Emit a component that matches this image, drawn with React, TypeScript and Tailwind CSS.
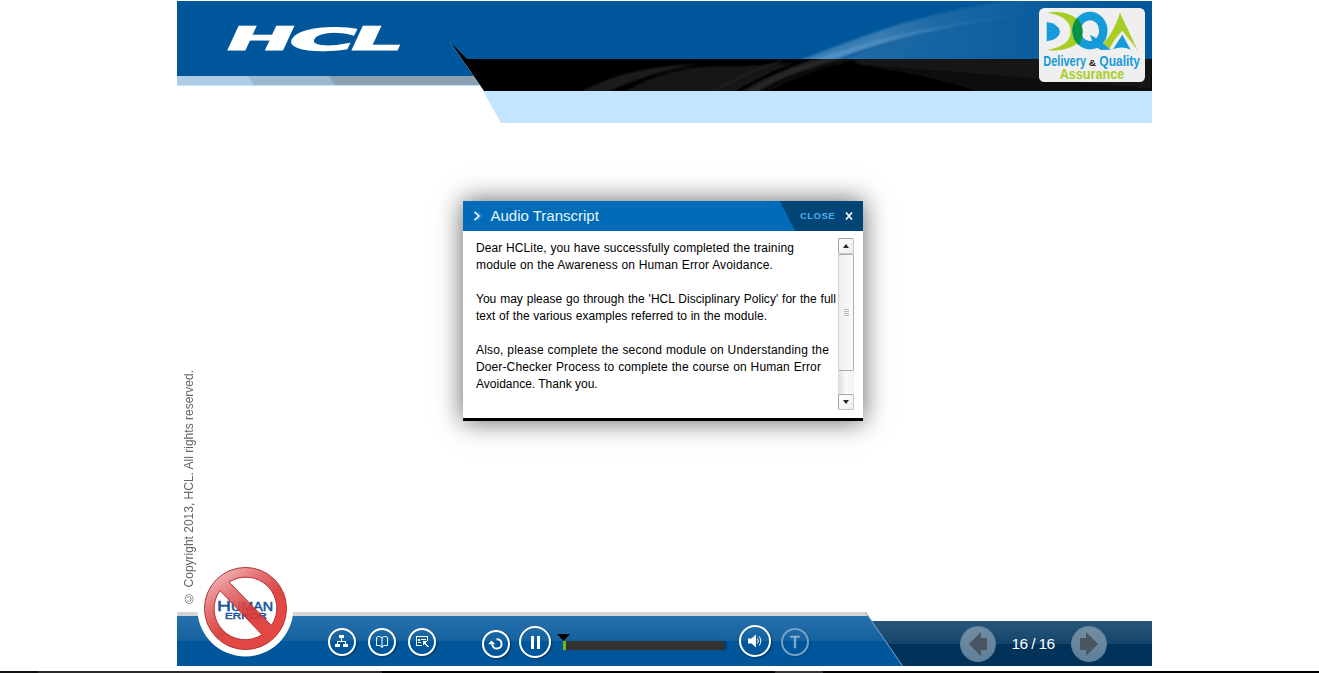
import React from "react";

const transcript: { text: string; width: string }[][] = [
  [
    { text: "Dear HCLite, you have successfully completed the training", width: "w-[318px] tracking-[0.11px]" },
    { text: "module on the Awareness on Human Error Avoidance.", width: "w-[297px] tracking-[0.17px]" },
  ],
  [
    { text: "You may please go through the 'HCL Disciplinary Policy' for the full", width: "w-[360px] tracking-[0.02px]" },
    { text: "text of the various examples referred to in the module.", width: "w-[291px] tracking-[0.03px]" },
  ],
  [
    { text: "Also, please complete the second module on Understanding the", width: "w-[353px] tracking-[0.18px]" },
    { text: "Doer-Checker Process to complete the course on Human Error", width: "w-[345px] tracking-[0.12px]" },
    { text: "Avoidance. Thank you.", width: "w-[121px]" },
  ],
];

function HclLogo() {
  return (
    <svg className="absolute left-[23px] top-[4px] overflow-visible" width="240" height="60" viewBox="200 5 240 60" role="img" aria-label="HCL">
      <g fill="#fff" stroke="#fff" strokeWidth="1.2" fontFamily="DejaVu Sans" fontWeight="700" fontSize="34">
        <text transform="matrix(2.38 0 -0.44 0.96 221.5 50.4)">H</text>
        <text transform="matrix(2.62 0 -0.44 0.88 284.5 49.8)" strokeWidth="2">C</text>
        <text transform="matrix(2.45 0 -0.44 0.96 345.5 50.4)">L</text>
      </g>
    </svg>
  );
}

function Swoosh() {
  return (
    <svg className="absolute inset-0" width="975" height="122" viewBox="177 1 975 122" aria-hidden="true">
      <defs>
        <linearGradient id="fade" gradientUnits="userSpaceOnUse" x1="820" y1="0" x2="1130" y2="0">
          <stop offset="0" stopColor="#fff" stopOpacity="0.13" />
          <stop offset="0.5" stopColor="#fff" stopOpacity="0.07" />
          <stop offset="1" stopColor="#fff" stopOpacity="0" />
        </linearGradient>
        <linearGradient id="streak" gradientUnits="userSpaceOnUse" x1="790" y1="0" x2="1040" y2="0">
          <stop offset="0" stopColor="#b9dcf5" stopOpacity="0.14" />
          <stop offset="0.35" stopColor="#b9dcf5" stopOpacity="0.18" />
          <stop offset="0.6" stopColor="#b9dcf5" stopOpacity="0.03" />
          <stop offset="1" stopColor="#b9dcf5" stopOpacity="0" />
        </linearGradient>
        <linearGradient id="line" gradientUnits="userSpaceOnUse" x1="810" y1="0" x2="1040" y2="0">
          <stop offset="0" stopColor="#9dcbee" stopOpacity="0.25" />
          <stop offset="0.5" stopColor="#9dcbee" stopOpacity="0.2" />
          <stop offset="1" stopColor="#9dcbee" stopOpacity="0" />
        </linearGradient>
        <filter id="soft" x="-5%" y="-5%" width="110%" height="110%">
          <feGaussianBlur stdDeviation="0.8" />
        </filter>
        <clipPath id="blueBand"><rect x="700" y="1" width="452" height="58" /></clipPath>
        <clipPath id="blackBand"><rect x="500" y="59" width="652" height="32" /></clipPath>
      </defs>
      <g clipPath="url(#blueBand)">
        <g filter="url(#soft)">
          <path d="M800 60 Q855 39 905 23 Q970 4 1040 -4 L1152 -4 L1152 64 L800 64 Z" fill="url(#fade)" />
          <path d="M798 61 Q855 38 905 22 Q970 4 1040 -2 Q1010 14 960 23 Q890 37 832 61 Z" fill="url(#streak)" />
          <path d="M808 61 Q870 41 920 30 Q980 19 1040 12 Q960 24 915 35 Q875 44 832 61 Z" fill="url(#line)" />
          <path d="M832 60 Q870 45 915 36 L915 38 Q880 46 846 60 Z" fill="#00569a" opacity="0.45" />
        </g>
      </g>
      <g clipPath="url(#blackBand)">
        <g filter="url(#soft)">
          <path d="M580 92 Q630 65 700 64 Q650 72 608 92 Z" fill="#1c1c1c" />
          <path d="M624 92 Q665 67 720 66 Q790 66 812 59 L832 59 Q780 75 752 92 Z" fill="#171717" />
          <path d="M712 92 Q750 70 782 61" stroke="#292929" strokeWidth="1.5" fill="none" />
          <path d="M736 92 Q770 72 810 59" stroke="#000" strokeWidth="3" fill="none" />
          <path d="M744 92 Q785 67 824 58 L848 58 Q790 72 758 92 Z" fill="#252525" />
          <path d="M768 90 Q810 68 850 60" stroke="#1b1b1b" strokeWidth="1.5" fill="none" />
          <path d="M848 58 L1152 58 L1152 93 L990 93 Q930 76 860 65 Z" fill="#121212" />
          <path d="M1160 93 L980 93 Q930 76 860 65 Q960 72 1160 90 Z" fill="#070707" />
        </g>
      </g>
    </svg>
  );
}

function DqaLogo() {
  return (
    <svg className="absolute right-[7px] top-[7px] overflow-visible" width="106" height="74" viewBox="27 24 318 222" role="img" aria-label="Delivery and Quality Assurance">
      <defs>
        <clipPath id="ringClip"><ellipse cx="180" cy="92" rx="53" ry="57" /></clipPath>
      </defs>
      <rect x="27" y="24" width="318" height="222" rx="16" fill="#efefef" />
      <path d="M50 66 Q88 72 90 95 Q88 118 50 124 Z" fill="#159bd9" />
      <path d="M52 38 C112 28 158 55 158 95 C158 132 112 157 50 150 C96 144 122 125 122 94 C122 64 98 45 52 38 Z" fill="#a8ce26" />
      <ellipse cx="180" cy="92" rx="40" ry="44" fill="none" stroke="#159bd9" strokeWidth="25" />
      <path d="M180 104 Q206 116 242 149 L213 150 Q190 140 180 104 Z" fill="#159bd9" />
      <g clipPath="url(#ringClip)">
        <path d="M126 40 Q158 65 158 95 Q158 125 138 145 L120 145 L120 40 Z" fill="#079246" />
      </g>
      <path d="M270 38 L323 151 Q306 128 277 92 Q256 112 238 146 L220 130 Q252 96 270 38 Z" fill="#a8ce26" />
      <path d="M277 104 L302 149 Q276 136 249 148 Z" fill="#159bd9" />
      <g fontFamily="Liberation Sans" fontWeight="700">
        <text x="40" y="197" fontSize="45" fill="#159bd9" textLength="128" lengthAdjust="spacingAndGlyphs">Delivery</text>
        <text x="176" y="197" fontSize="25" fill="#222" textLength="22" lengthAdjust="spacingAndGlyphs">&amp;</text>
        <text x="208" y="197" fontSize="45" fill="#159bd9" textLength="122" lengthAdjust="spacingAndGlyphs">Quality</text>
        <text x="89" y="236" fontSize="42" fill="#a8ce26" textLength="194" lengthAdjust="spacingAndGlyphs">Assurance</text>
      </g>
    </svg>
  );
}

function Header() {
  return (
    <header className="relative h-[122px] shrink-0">
      <div className="h-[58px] bg-[#00569a]" />
      <div className="ml-[273px] h-[32px] bg-black" />
      <div className="ml-[306px] h-[32px] bg-[#c4e5ff] [clip-path:polygon(0_0,100%_0,100%_100%,18px_100%)]" />
      <Swoosh />
      <div className="absolute left-[273px] top-[41px] h-[18px] w-[18px] bg-black [clip-path:polygon(0_0,100%_100%,12px_100%)]" />
      <div className="absolute left-0 top-[41px] h-[49px] w-[307px] bg-white [clip-path:polygon(0_0,273px_0,100%_100%,0_100%)]">
        <div className="h-[34px] bg-[#00569a]" />
        <div className="flex h-[10px] border-b border-[#c4e5ff] bg-[#8a9fb2]">
          <div className="relative w-[158px] bg-[#9db7cd] [clip-path:polygon(0_0,152px_0,100%_100%,0_100%)]">
            <div className="h-full w-[77px] bg-[#aecde6] [clip-path:polygon(0_0,71px_0,100%_100%,0_100%)]" />
          </div>
        </div>
      </div>
      <HclLogo />
      <DqaLogo />
    </header>
  );
}

function ScrollButton({ up }: { up?: boolean }) {
  return (
    <button className="flex h-[16px] w-[16px] items-center justify-center rounded-[2px] border border-[#a3a6a9] border-b-[#c4c6c8] border-r-[#c4c6c8] bg-gradient-to-br from-white to-[#ececec]">
      <svg width="6" height="4" viewBox="0 0 6 4"><path d={up ? "M0 4 L3 0 L6 4Z" : "M0 0 L3 4 L6 0Z"} fill="#1b2a36" /></svg>
    </button>
  );
}

function Dialog() {
  return (
    <section className="ml-[261px] mt-[78px] flex h-[220px] w-[400px] flex-col border-b-[3px] border-black bg-white shadow-[0_0_24px_1px_rgba(0,0,0,0.58)]">
      <div className="flex h-[30px] shrink-0 items-center bg-[#006cb7]">
        <svg className="ml-[10px]" width="11" height="10" viewBox="0 0 11 10" fill="none">
          <path d="M5 1 L9 5 L5 9" stroke="#1a86d8" strokeWidth="1.5" />
          <path d="M1.5 0.8 L6 5 L1.5 9.2" stroke="#fff" strokeWidth="1.6" />
        </svg>
        <h1 className="ml-[6.5px] mt-px text-[15px] text-[#e8f4fc]">Audio Transcript</h1>
        <button className="ml-auto flex h-full w-[83px] items-center bg-[#004575] pl-[19.5px] [clip-path:polygon(0_0,100%_0,100%_100%,15px_100%)]">
          <span className="w-[36px] text-[9.5px] font-bold tracking-[0.5px] text-[#4fb0e4]">CLOSE</span>
          <svg className="ml-[9px]" width="8" height="8" viewBox="0 0 8 8"><path d="M1 0.5 L7 7.5 M7 0.5 L1 7.5" stroke="#fff" strokeWidth="1.6" /></svg>
        </button>
      </div>
      <div className="flex flex-1 pl-[13px] pr-[8px] pt-[7px]">
        <div className="flex w-[362px] shrink-0 flex-col gap-[17px] pt-[2px] text-[12px] leading-[17px] text-black">
          {transcript.map((lines) => (
            <p key={lines[0].text}>
              {lines.map((line) => (
                <span key={line.text} className={"block whitespace-nowrap text-justify [text-align-last:justify] " + line.width}>{line.text}</span>
              ))}
            </p>
          ))}
        </div>
        <div className="flex h-[172px] w-[16px] flex-col bg-gradient-to-r from-[#dcdcdc] via-[#fafafa] to-[#f2f2f2]">
          <ScrollButton up />
          <div className="flex h-[117px] flex-col items-center justify-center gap-px rounded-[2px] border border-[#a9abad] border-l-[#d0d0d0] bg-gradient-to-r from-[#efefef] to-[#fbfbfb]">
            <i className="h-px w-[5px] bg-[#b5b8ba]" />
            <i className="h-px w-[5px] bg-[#b5b8ba]" />
            <i className="h-px w-[5px] bg-[#b5b8ba]" />
            <i className="h-px w-[5px] bg-[#b5b8ba]" />
          </div>
          <div className="flex-1" />
          <ScrollButton />
        </div>
      </div>
    </section>
  );
}

function HumanErrorBadge() {
  return (
    <svg className="absolute bottom-[9px] left-[20px]" width="97" height="97" viewBox="197 560.5 97 97" role="img" aria-label="No human error">
      <defs>
        <linearGradient id="ring" x1="0.1" y1="0" x2="0.65" y2="0.75">
          <stop offset="0" stopColor="#f5c4c4" />
          <stop offset="0.4" stopColor="#e2696a" />
          <stop offset="0.75" stopColor="#d83330" />
          <stop offset="1" stopColor="#df3431" />
        </linearGradient>
      </defs>
      <circle cx="245.3" cy="609" r="48" fill="#fff" />
      <g fill="#15549b" stroke="#15549b" strokeWidth="0.5" fontFamily="Liberation Sans">
        <text x="217" y="611" fontSize="15" textLength="14" lengthAdjust="spacingAndGlyphs">H</text>
        <text x="231" y="611" fontSize="12" textLength="42" lengthAdjust="spacingAndGlyphs">UMAN</text>
        <text x="225" y="619" fontSize="9" textLength="42" lengthAdjust="spacingAndGlyphs">ERROR</text>
      </g>
      <path
        fillRule="evenodd"
        fill="url(#ring)"
        stroke="#b23035"
        strokeWidth="1"
        d="M204.5 609 a41 41 0 1 0 82 0 a41 41 0 1 0 -82 0 Z M229 582.6 A31 31 0 0 1 271.5 626 Z M220 591 L262 635.2 A31 31 0 0 1 220 591 Z"
        fillOpacity="0.9"
      />
    </svg>
  );
}

function RoundButton({ className, children }: { className: string; children: React.ReactNode }) {
  return (
    <button className={"flex shrink-0 items-center justify-center rounded-full border-2 border-white text-white shadow-[1px_1px_2px_rgba(0,0,0,0.4)] " + className}>
      {children}
    </button>
  );
}

function NavButton({ className, left }: { className: string; left?: boolean }) {
  return (
    <button className={"flex h-[36px] w-[36px] shrink-0 items-center justify-center rounded-full border border-[#63839b] bg-gradient-to-b from-[#718da2] to-[#5f7f98] " + className}>
      <svg width="18" height="24" viewBox="0 0 18 24">
        <path d={left ? "M0 12 L12 0 V6 H18 V18 H12 V24 Z" : "M18 12 L6 0 V6 H0 V18 H6 V24 Z"} fill="#4a5562" />
      </svg>
    </button>
  );
}

function Footer() {
  return (
    <footer className="relative flex h-[54px] shrink-0">
      <div className="absolute bottom-0 right-0 h-[45px] w-[287px] bg-[linear-gradient(to_bottom,#28567b_0px,#15446a_23px,#00325a_23px,#00325a_45px)] [clip-path:polygon(0_0,100%_0,100%_100%,31px_100%)]" />
      <div className="absolute left-0 top-0 h-[54px] w-[726px] bg-[#7fa9cb] [clip-path:polygon(0_0,689px_0,100%_100%,0_100%)]" />
      <div className="absolute left-0 top-0 h-[54px] w-[725px] bg-[linear-gradient(to_bottom,#d0d4d7_0px,#d0d4d7_4px,#2771ad_4px,#15629f_29px,#00569a_29px,#00569a_54px)] [clip-path:polygon(0_0,688px_0,100%_100%,0_100%)]" />
      <div className="relative flex w-full items-start">
        <RoundButton className="ml-[151px] mt-[16px] h-[28px] w-[28px]">
          <svg className="mb-[2px] mr-px shrink-0" width="13" height="12" viewBox="0 0 13 12" shapeRendering="crispEdges" fill="#fff">
            <path d="M4 0h5v3H4zM6 3h1v3H6zM2 6h9v1H2zM2 7h1v2H2zM10 7h1v2h-1zM0 9h5v3H0zM8 9h5v3H8z" />
          </svg>
        </RoundButton>
        <RoundButton className="ml-[12px] mt-[16px] h-[28px] w-[28px]">
          <svg className="mb-px" width="12" height="14" viewBox="0 0 12 14" fill="none" stroke="#fff">
            <path d="M6 3 Q5 1.5 3.5 1.5 H2 L0.5 2.5 V10.5 H4 L6 12 L8 10.5 H11.5 V2.5 L10 1.5 H8.5 Q7 1.5 6 3 V13" />
          </svg>
        </RoundButton>
        <RoundButton className="ml-[12px] mt-[16px] h-[28px] w-[28px]">
          <svg width="13" height="12" viewBox="0 0 13 12" shapeRendering="crispEdges" fill="#fff">
            <path d="M0 0h12v1H0zM0 1h1v9H0zM11 1h1v4h-1zM0 9h6v1H0zM2 3h2v2H2zM5 3h5v1H5zM2 6h3v1H2zM7 5h4v1H7zM7 6h3v1H7zM7 7h3v1H7zM7 8h1v1H7zM9 8h2v1H9zM10 9h2v1h-2zM11 10h2v1h-2z" />
          </svg>
        </RoundButton>
        <RoundButton className="ml-[46px] mt-[18px] h-[28px] w-[28px]">
          <svg className="mb-px mr-px" width="15" height="14" viewBox="0 0 15 14">
            <path d="M8.6 2.2 A4.7 4.7 0 1 1 4.2 7.2" fill="none" stroke="#fff" strokeWidth="2" />
            <path d="M0 7.2 L3.4 3.4 L7.4 7.2 Z" fill="#fff" />
          </svg>
        </RoundButton>
        <RoundButton className="ml-[9px] mt-[14px] h-[32px] w-[32px]">
          <svg width="9" height="13" viewBox="0 0 9 13" fill="#fff"><path d="M0 0h3v13H0zM6 0h3v13H6z" /></svg>
        </RoundButton>
        <div className="ml-[6px] mt-[22px] w-[168px]">
          <svg className="block" width="13" height="7" viewBox="0 0 13 7"><path d="M0 0 H13 L6.5 7 Z" fill="#000" /></svg>
          <div className="ml-[6px] flex h-[9px] w-[161px] bg-[#333] shadow-[2px_0_3px_rgba(0,20,60,0.5),0_-1px_0_#1f6cab,0_1px_0_#1260a3]">
            <div className="w-[3px] bg-[#78b80c]" />
          </div>
        </div>
        <RoundButton className="ml-[14px] mt-[13px] h-[32px] w-[32px]">
          <svg className="mb-px mr-px" width="14" height="14" viewBox="0 0 14 14" fill="#fff">
            <path d="M0 4.5 H3.5 L8 0.5 V13.5 L3.5 9.5 H0 Z" />
            <path d="M9.5 4.5 Q11 7 9.5 9.5 M11.2 2.5 Q14.4 7 11.2 11.5" fill="none" stroke="#fff" />
          </svg>
        </RoundButton>
        <button className="ml-[10px] mt-[16px] flex h-[28px] w-[28px] items-center justify-center rounded-full border-2 border-[#73a2c9] text-[#8db3d2] shadow-[1px_1px_2px_rgba(0,0,0,0.2)]">
          <span className="mt-px text-[16px] leading-none [-webkit-text-stroke:0.6px_#8db3d2]">T</span>
        </button>
        <NavButton left className="ml-[151px] mt-[14px]" />
        <span className="mt-[22px] w-[74px] whitespace-nowrap text-center text-[15.5px] leading-[20px] tracking-[-0.6px] text-white">16 / 16</span>
        <NavButton className="ml-px mt-[14px]" />
      </div>
      <HumanErrorBadge />
    </footer>
  );
}

export default function App() {
  return (
    <div className="flex h-[673px] w-[1319px] flex-col overflow-hidden bg-white font-['Liberation_Sans',sans-serif]">
      <main className="ml-[177px] flex h-[666px] w-[975px] flex-col pt-px">
        <Header />
        <div className="flex flex-1 items-start">
          <p className="mb-[7px] flex w-[25px] rotate-180 self-end whitespace-nowrap pr-[4px] text-[12px] leading-[16px] text-[#666] [writing-mode:vertical-rl]">
            © Copyright 2013, HCL. All rights reserved.
          </p>
          <Dialog />
        </div>
        <Footer />
      </main>
      <div className="mt-[5px] flex h-[2px] bg-black">
        <div className="w-[38px] bg-[#111]" />
        <div className="w-[344px] bg-[#2b2b2b]" />
        <div className="ml-[393px] w-[48px] bg-[#333]" />
      </div>
    </div>
  );
}
